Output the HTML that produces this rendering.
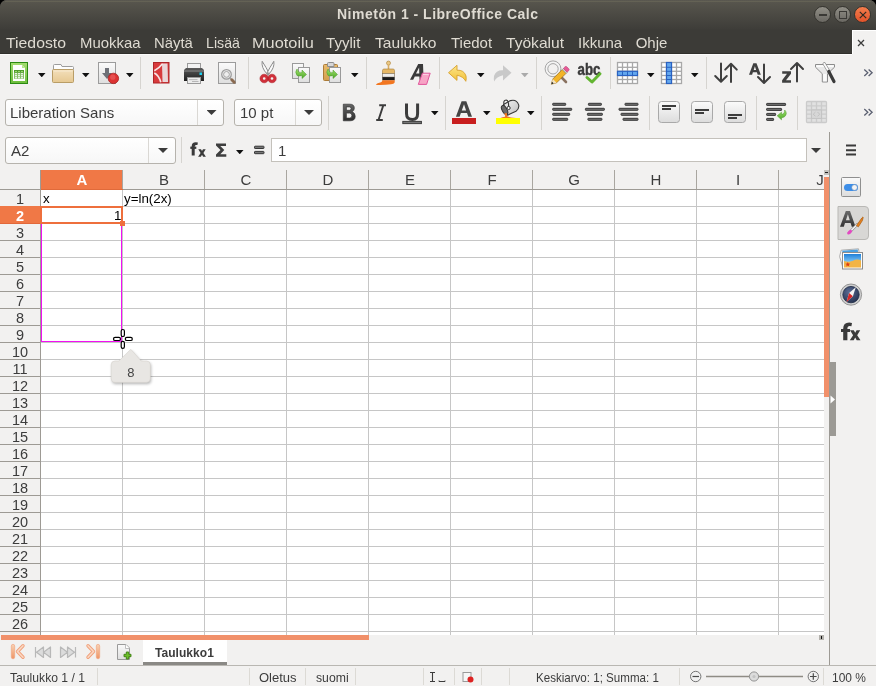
<!DOCTYPE html><html><head><meta charset="utf-8"><style>
*{box-sizing:border-box;margin:0;padding:0}
html,body{width:876px;height:686px;overflow:hidden;background:#000}
body{position:relative;font-family:"Liberation Sans",sans-serif;color:#3c3c3c}
.a{position:absolute}
svg{position:absolute;overflow:visible}
#win{will-change:transform;position:absolute;left:0;top:0;width:876px;height:686px;background:linear-gradient(#5a5850 0px,#3c3b37 54px,#f2f1f0 54px);border-radius:7px 7px 0 0;overflow:hidden}
.mi{position:absolute;top:34px;font-size:15px;color:#dfdbd2;white-space:nowrap;transform-origin:0 0}
.wb{position:absolute;top:6px;width:17px;height:17px;border-radius:50%;border:1px solid #35342f}
.sep{position:absolute;width:1px;background:#d6d4d0}
.dd{position:absolute;width:7.5px;height:4.3px;background:#111;clip-path:polygon(0 0,100% 0,50% 100%)}
.dd2{position:absolute;width:10px;height:5px;background:#3c3c3c;clip-path:polygon(0 0,100% 0,50% 100%)}
.box{position:absolute;background:linear-gradient(#fff,#f7f7f7);border:1px solid #b6b3ad;border-radius:3px}
.ui{font-size:15px;color:#3c3c3c;white-space:nowrap;position:absolute}
.rh{position:absolute;left:0;width:40px;height:17px;text-align:center;font-size:14.5px;color:#3c3c3c;line-height:18px}
.ch{position:absolute;top:170px;height:19px;width:82px;text-align:center;font-size:15px;color:#3c3c3c;line-height:19px}
.cell{position:absolute;font-size:13.33px;color:#000;white-space:nowrap}
.st{position:absolute;top:670px;font-size:13px;color:#3c3c3c;white-space:nowrap;transform-origin:0 0}
.ssep{position:absolute;top:668px;height:17px;width:1px;background:#dcdad5}
</style></head><body><div id="win">
<div class="a" style="left:0;top:0;width:876px;height:54px;background:linear-gradient(#5a5850 0px,#56544c 3px,#3e3d39 29px,#3c3b37 30px)"></div>
<div class="a" style="left:5px;top:1px;width:866px;height:1px;background:#646255"></div>
<div class="a" style="left:337px;top:6px;font-weight:bold;font-size:14px;color:#dfdbd2;letter-spacing:0.5px;white-space:nowrap">Nimetön 1 - LibreOffice Calc</div>
<div class="wb" style="left:814px;background:linear-gradient(#908e86,#6a6862)"><div class="a" style="left:3.5px;top:7px;width:8px;height:1.5px;background:#3a3935"></div></div>
<div class="wb" style="left:834px;background:linear-gradient(#908e86,#6a6862)"><div class="a" style="left:4px;top:4px;width:8px;height:8px;border:1.5px solid #3a3935"></div></div>
<div class="wb" style="left:854px;background:linear-gradient(#f37d4c,#e2532a)"><svg style="left:3px;top:3px" width="10" height="10"><path d="M1.8 1.8L8.2 8.2M8.2 1.8L1.8 8.2" stroke="#2f2a22" stroke-width="1.2"/></svg></div>
<div class="a" style="left:852px;top:30px;width:24px;height:24px;background:#f2f1f0;border-left:1px solid #fff;border-top:1px solid #fff"><svg style="left:4px;top:8px" width="8" height="8"><path d="M1 1L7 7M7 1L1 7" stroke="#3c3c3c" stroke-width="1.3"/></svg></div>
<div class="a" style="left:0;top:53px;width:852px;height:1px;background:#302f2b"></div><div class="a" style="left:0;top:54px;width:852px;height:1px;background:#fbfbfa"></div>
<span class="mi" style="left:6.0px;transform:scaleX(1.053)">Tiedosto</span>
<span class="mi" style="left:80.0px;transform:scaleX(0.994)">Muokkaa</span>
<span class="mi" style="left:154.4px;transform:scaleX(0.990)">Näytä</span>
<span class="mi" style="left:206.0px;transform:scaleX(0.946)">Lisää</span>
<span class="mi" style="left:251.6px;transform:scaleX(1.089)">Muotoilu</span>
<span class="mi" style="left:325.8px;transform:scaleX(1.006)">Tyylit</span>
<span class="mi" style="left:374.7px;transform:scaleX(1.039)">Taulukko</span>
<span class="mi" style="left:450.7px;transform:scaleX(0.998)">Tiedot</span>
<span class="mi" style="left:505.8px;transform:scaleX(1.039)">Työkalut</span>
<span class="mi" style="left:578.0px;transform:scaleX(1.000)">Ikkuna</span>
<span class="mi" style="left:635.7px;transform:scaleX(1.000)">Ohje</span>
<div class="sep" style="left:140px;top:57px;height:32px"></div>
<div class="sep" style="left:248px;top:57px;height:32px"></div>
<div class="sep" style="left:366px;top:57px;height:32px"></div>
<div class="sep" style="left:439px;top:57px;height:32px"></div>
<div class="sep" style="left:536px;top:57px;height:32px"></div>
<div class="sep" style="left:610px;top:57px;height:32px"></div>
<div class="sep" style="left:706px;top:57px;height:32px"></div>
<div class="dd" style="left:38px;top:73px"></div>
<div class="dd" style="left:82px;top:73px"></div>
<div class="dd" style="left:126px;top:73px"></div>
<div class="dd" style="left:351px;top:73px"></div>
<div class="dd" style="left:477px;top:73px"></div>
<div class="dd" style="left:647px;top:73px"></div>
<div class="dd" style="left:691px;top:73px"></div>
<div class="dd" style="left:521px;top:73px;background:#aaa"></div>
<svg style="left:0px;top:54px" width="876" height="38" viewBox="0 54 876 38"><defs>
<linearGradient id="gGreen" x1="0" y1="0" x2="0" y2="1"><stop offset="0" stop-color="#a5dd72"/><stop offset="1" stop-color="#6cbd3c"/></linearGradient>
<linearGradient id="gFold" x1="0" y1="0" x2="0" y2="1"><stop offset="0" stop-color="#f3dfbb"/><stop offset="1" stop-color="#e6c891"/></linearGradient>
<linearGradient id="gPage" x1="0" y1="0" x2="0" y2="1"><stop offset="0" stop-color="#fbfbfb"/><stop offset="1" stop-color="#dedede"/></linearGradient>
<linearGradient id="gPrn" x1="0" y1="0" x2="0" y2="1"><stop offset="0" stop-color="#5a5a5a"/><stop offset="1" stop-color="#1e1e1e"/></linearGradient>
<linearGradient id="gClip" x1="0" y1="0" x2="0" y2="1"><stop offset="0" stop-color="#e9bb6c"/><stop offset="1" stop-color="#d39f50"/></linearGradient>
<linearGradient id="gYel" x1="0" y1="0" x2="0" y2="1"><stop offset="0" stop-color="#fde68a"/><stop offset="1" stop-color="#f2c23a"/></linearGradient>
<linearGradient id="gArr" x1="0" y1="0" x2="0" y2="1"><stop offset="0" stop-color="#9ee06a"/><stop offset="1" stop-color="#4ea82a"/></linearGradient>
<linearGradient id="gDark" x1="0" y1="0" x2="0" y2="1"><stop offset="0" stop-color="#666"/><stop offset="1" stop-color="#2e2e2e"/></linearGradient>
<linearGradient id="gBtn" x1="0" y1="0" x2="0" y2="1"><stop offset="0" stop-color="#fbfbfb"/><stop offset="1" stop-color="#dcdcdc"/></linearGradient>
<linearGradient id="gSilver" x1="0" y1="0" x2="1" y2="1"><stop offset="0" stop-color="#f4f4f4"/><stop offset="1" stop-color="#bdbdbd"/></linearGradient>
</defs><rect x="10.5" y="62.5" width="17" height="21" fill="url(#gGreen)" stroke="#2b8a12" stroke-width="1"/><path d="M13 65H22L25 68V81H13Z" fill="#fff"/><path d="M22 65L25 68H22Z" fill="#b6e48c"/><rect x="14" y="70" width="10" height="8.8" fill="#86bf68"/><rect x="14" y="70" width="10" height="2.6" fill="#4e9b2c"/><rect x="15" y="71" width="2" height="1" fill="#9ad86a"/><rect x="15" y="73.2" width="2" height="1.1" fill="#fff"/><rect x="15" y="75.2" width="2" height="1.1" fill="#fff"/><rect x="15" y="77.2" width="2" height="1.1" fill="#fff"/><rect x="18" y="71" width="2" height="1" fill="#9ad86a"/><rect x="18" y="73.2" width="2" height="1.1" fill="#fff"/><rect x="18" y="75.2" width="2" height="1.1" fill="#fff"/><rect x="18" y="77.2" width="2" height="1.1" fill="#fff"/><rect x="21" y="71" width="2" height="1" fill="#9ad86a"/><rect x="21" y="73.2" width="2" height="1.1" fill="#fff"/><rect x="21" y="75.2" width="2" height="1.1" fill="#fff"/><rect x="21" y="77.2" width="2" height="1.1" fill="#fff"/><path d="M53.5 69.5V65.5Q53.5 64.5 54.5 64.5H61L62 66.5H72.5Q73.5 66.5 73.5 67.5V69.5Z" fill="#fdfdfd" stroke="#9c9c9c"/><rect x="52.5" y="69.5" width="21" height="13" rx="1" fill="url(#gFold)" stroke="#b99d66"/><rect x="53.5" y="70.5" width="19" height="1" fill="#f8ead0"/><rect x="98.5" y="62.5" width="17" height="21" fill="url(#gPage)" stroke="#9c9c9c"/><path d="M105 68H109V73H112L107 79L102 73H105Z" fill="#6d7077"/><circle cx="113.4" cy="78.4" r="5.2" fill="#dc3232" stroke="#a81e1e" stroke-width="0.8"/><circle cx="112.8" cy="77.2" r="2.6" fill="#ee6a6a" opacity="0.55"/><rect x="153.5" y="62.5" width="15.5" height="20.5" fill="#d83b3d" stroke="#ad2629"/><path d="M162 63.5L167.5 63.5L168 82L162.5 82Z" fill="#e9d6d8"/><path d="M162.5 63.8Q159 68.5 154.3 70.8" stroke="#f6e4e4" stroke-width="1.7" fill="none"/><path d="M154.3 73Q159 75.5 160.8 82.3" stroke="#f6e4e4" stroke-width="1.7" fill="none"/><rect x="187.5" y="63.5" width="13" height="7" fill="#f2f2f2" stroke="#9a9a9a"/><path d="M186 68H202L204 70V81H184V70Z" fill="url(#gPrn)"/><rect x="184" y="70" width="20" height="2" fill="#6a6a6a"/><rect x="199.5" y="72.5" width="2.5" height="2.5" fill="#18d0f0"/><rect x="187.5" y="77.5" width="13" height="6" fill="#ececec" stroke="#9a9a9a"/><rect x="189" y="79.3" width="8.5" height="0.8" fill="#aaa"/><rect x="192" y="81.2" width="6.5" height="0.8" fill="#aaa"/><rect x="218.5" y="62.5" width="17" height="21" fill="url(#gPage)" stroke="#9c9c9c"/><circle cx="226.5" cy="74.4" r="4.8" fill="none" stroke="#9b9b9b" stroke-width="1.2"/><circle cx="226.5" cy="74.4" r="2.9" fill="#eee" stroke="#a5a5a5" stroke-width="1"/><path d="M229.8 77.8L231.2 79.2" stroke="#a0a0a0" stroke-width="1.4"/><path d="M231.8 79.8L234.2 82.2" stroke="#8a6a50" stroke-width="3" stroke-linecap="round"/><path d="M262.2 61.3Q261 67.5 267.2 74.2L269 73Q266.2 67.5 262.2 61.3Z" fill="#fbfbfb" stroke="#8a8a8a" stroke-width="1"/><path d="M273.8 61.3Q275 67.5 268.8 74.2L267 73Q269.8 67.5 273.8 61.3Z" fill="#fbfbfb" stroke="#8a8a8a" stroke-width="1"/><path d="M266.6 72.5L269.4 72.5L269 75.5L267 75.5Z" fill="#9a9a9a"/><circle cx="264.2" cy="78.5" r="2.8" fill="none" stroke="#d0303a" stroke-width="2.9"/><circle cx="272" cy="78.5" r="2.8" fill="none" stroke="#d0303a" stroke-width="2.9"/><circle cx="264.2" cy="78.5" r="4.3" fill="none" stroke="#a81e26" stroke-width="0.5"/><circle cx="272" cy="78.5" r="4.3" fill="none" stroke="#a81e26" stroke-width="0.5"/><rect x="292.5" y="63.5" width="11" height="15" fill="url(#gPage)" stroke="#9a9a9a"/><rect x="298.5" y="67.5" width="11" height="15" fill="url(#gPage)" stroke="#9a9a9a"/><path d="M297 69Q294.5 72 297 75.5Q299 76.5 302 75.5L302 78.5L306.5 74.5L302 70L302 72.5Q298.5 73.5 297 69Z" fill="url(#gArr)" stroke="#4a9a28" stroke-width="0.5"/><rect x="323.5" y="64.5" width="14" height="16" rx="1" fill="url(#gClip)" stroke="#ad7c38"/><path d="M327.5 66.5V63.5Q327.5 62.5 328.5 62.5H333Q334 62.5 334 63.5V66.5Z" fill="#d8d8d8" stroke="#8e8e8e"/><rect x="329.5" y="67.5" width="11" height="15" fill="url(#gPage)" stroke="#9a9a9a"/><path d="M328 69Q325.5 72 328 75.5Q330 76.5 333 75.5L333 78.5L337.5 74.5L333 70L333 72.5Q329.5 73.5 328 69Z" fill="url(#gArr)" stroke="#4a9a28" stroke-width="0.5"/><circle cx="388.5" cy="63.1" r="2" fill="#ebc884" stroke="#b58a40" stroke-width="0.7"/><rect x="387.7" y="64.8" width="1.6" height="4.6" fill="#d9ad62"/><path d="M382.5 70.5Q382.5 69 384 69H393Q394.5 69 394.5 70.5V73.5H382.5Z" fill="#e6b866" stroke="#a57c38" stroke-width="0.6"/><rect x="382.5" y="73.5" width="12" height="3.6" fill="#ededed" stroke="#7a6a50" stroke-width="0.6"/><rect x="382.3" y="77.1" width="12.4" height="3.2" fill="#1a1a1a"/><path d="M382.3 80.2H394.7V82.5Q394 84 391 84.3Q386 84.8 380 84.9Q376.5 85 375.8 84.4Q377 83 381 82.2Q382.3 81.8 382.3 80.2Z" fill="#f27620"/><path d="M410 79.8L418.2 64H423L423.6 79.8H419.6L419.4 76.4H414.8L413.2 79.8ZM416 73.6H419.3L419.1 67.6Z" fill="#3a3a3a" fill-rule="evenodd"/><path d="M422.4 73.2H430.2L426.6 84.4H418.3Z" fill="#f7a3c5" stroke="#e0559a" stroke-width="1"/><path d="M422.9 74.4H428.6" stroke="#fcd6e6" stroke-width="1"/><path d="M448.5 72.7L457 65.3V70.2Q464 69.8 466 76Q466.5 79 465.8 81.3Q463.5 76.5 457 75.2V80.4Z" fill="url(#gYel)" stroke="#d7a02e" stroke-width="0.9" stroke-linejoin="round"/><path d="M511.5 72.8L503 65.2V70.2Q496 69.8 494 76Q493.5 79 494.2 81.5Q496.5 76.5 503 75.2V80.5Z" fill="#c9c9c9"/><circle cx="553" cy="68.8" r="6.6" fill="none" stroke="#f4f4f4" stroke-width="2.6"/><circle cx="553" cy="68.8" r="7.9" fill="none" stroke="#9c9c9c" stroke-width="0.9"/><circle cx="553" cy="68.8" r="5.2" fill="#f2f1f0" stroke="#9c9c9c" stroke-width="0.9"/><path d="M559.8 75.6L566 82" stroke="#8a7260" stroke-width="2.6" stroke-linecap="round"/><path d="M551.3 84.2L552.8 79L562.3 69.5L566.1 73.3L556.6 82.8Z" fill="#f2b428" stroke="#9a6a14" stroke-width="0.7" stroke-linejoin="round"/><path d="M562.3 69.5L563.4 68.4L567.2 72.2L566.1 73.3Z" fill="#cfcfcf" stroke="#888" stroke-width="0.5"/><path d="M563.4 68.4L565 66.8Q565.9 65.9 566.8 66.8L568.8 68.8Q569.7 69.7 568.8 70.6L567.2 72.2Z" fill="#e75a95" stroke="#b03a70" stroke-width="0.5"/><path d="M551.3 84.2L552.8 79L556.6 82.8Z" fill="#f2e2c0"/><path d="M551.3 84.2L552 81.8L553.7 83.5Z" fill="#222"/><text x="577.6" y="74.7" font-family="Liberation Sans" font-weight="bold" font-size="16" fill="#3a3a3a" stroke="#3a3a3a" stroke-width="0.5" textLength="22.8" lengthAdjust="spacingAndGlyphs">abc</text><path d="M587 77.5L592 82L600 73.8" fill="none" stroke="#63b531" stroke-width="3" stroke-linecap="round" stroke-linejoin="round"/><rect x="617.5" y="62.5" width="20" height="21" fill="#fff" stroke="#a8a8a8" stroke-width="1.3"/><path d="M622.5 62.5V83.5" stroke="#a8a8a8" stroke-width="1.3"/><path d="M627.5 62.5V83.5" stroke="#a8a8a8" stroke-width="1.3"/><path d="M632.5 62.5V83.5" stroke="#a8a8a8" stroke-width="1.3"/><path d="M617.5 67.3H637.5" stroke="#a8a8a8" stroke-width="1.3"/><path d="M617.5 71.3H637.5" stroke="#a8a8a8" stroke-width="1.3"/><path d="M617.5 75.5H637.5" stroke="#a8a8a8" stroke-width="1.3"/><path d="M617.5 79.5H637.5" stroke="#a8a8a8" stroke-width="1.3"/><rect x="617.5" y="71.3" width="20" height="4.2" fill="#63a8ee" stroke="#2a62c2" stroke-width="1.2"/><path d="M622.5 71.3V75.5" stroke="#2a62c2" stroke-width="1"/><path d="M627.5 71.3V75.5" stroke="#2a62c2" stroke-width="1"/><path d="M632.5 71.3V75.5" stroke="#2a62c2" stroke-width="1"/><rect x="661.5" y="62.5" width="20" height="21" fill="#fff" stroke="#a8a8a8" stroke-width="1.3"/><path d="M666.5 62.5V83.5" stroke="#a8a8a8" stroke-width="1.3"/><path d="M671.5 62.5V83.5" stroke="#a8a8a8" stroke-width="1.3"/><path d="M676.5 62.5V83.5" stroke="#a8a8a8" stroke-width="1.3"/><path d="M661.5 67.3H681.5" stroke="#a8a8a8" stroke-width="1.3"/><path d="M661.5 71.3H681.5" stroke="#a8a8a8" stroke-width="1.3"/><path d="M661.5 75.5H681.5" stroke="#a8a8a8" stroke-width="1.3"/><path d="M661.5 79.5H681.5" stroke="#a8a8a8" stroke-width="1.3"/><rect x="666.5" y="62.5" width="5" height="21" fill="#63a8ee" stroke="#2a62c2" stroke-width="1.2"/><path d="M666.5 67.3H671.5" stroke="#2a62c2" stroke-width="1"/><path d="M666.5 71.3H671.5" stroke="#2a62c2" stroke-width="1"/><path d="M666.5 75.5H671.5" stroke="#2a62c2" stroke-width="1"/><path d="M666.5 79.5H671.5" stroke="#2a62c2" stroke-width="1"/><path d="M721 63.5V81.5M715.2 76L721 81.8L726.8 76" fill="none" stroke="#3f3f3f" stroke-width="2" stroke-linecap="round" stroke-linejoin="round"/><path d="M731 82V63.8M725.2 69.6L731 63.8L736.8 69.6" fill="none" stroke="#3f3f3f" stroke-width="2" stroke-linecap="round" stroke-linejoin="round"/><path d="M749 74.7L753.3 63.2H756.5L760.8 74.7H757.7L756.9 72.3H752.9L752.1 74.7ZM753.7 69.9H756.1L754.9 66.2Z" fill="#404040" fill-rule="evenodd"/><path d="M764 64.5V82.5M758 77L764 83L770 77" fill="none" stroke="#3f3f3f" stroke-width="2" stroke-linecap="round" stroke-linejoin="round"/><path d="M782.2 71.3H791V73.8L786 80.2H791V82.7H782.1V80.2L787 73.8H782.2Z" fill="#404040"/><path d="M797 81.5V63M791 69L797 63L803 69" fill="none" stroke="#3f3f3f" stroke-width="2" stroke-linecap="round" stroke-linejoin="round"/><path d="M815.5 64.5H834.5V67.2L827.5 73.8V82H822.3V73.8L815.5 67.2Z" fill="#e9e9e9" stroke="#8c8c8c" stroke-width="1" stroke-linejoin="round"/><path d="M816.3 65.3H833.7V66.8H816.3Z" fill="#fff"/><path d="M823.2 74H826.6V81.3H823.2Z" fill="#fafafa"/><path d="M824.2 63.8L829 71.8" stroke="#8a8a8a" stroke-width="3.2" stroke-linecap="round"/><path d="M824.2 63.8L829 71.8" stroke="#fbfbfb" stroke-width="1.8" stroke-linecap="round"/><path d="M828.8 71.5L834 81.5" stroke="#3a3a3a" stroke-width="3.2" stroke-linecap="round"/><path d="M864.3 69.5L867.8 72.7L864.3 75.9M868.6 69.5L872.1 72.7L868.6 75.9" fill="none" stroke="#5a5f70" stroke-width="1.3"/></svg>
<div class="box" style="left:5px;top:99px;width:219px;height:27px"></div>
<div class="a" style="left:197px;top:100px;width:1px;height:25px;background:#dad8d4"></div>
<div class="dd2" style="left:206.5px;top:110px"></div>
<div class="ui" style="left:10px;top:104px">Liberation Sans</div>
<div class="box" style="left:234px;top:99px;width:88px;height:27px"></div>
<div class="a" style="left:295px;top:100px;width:1px;height:25px;background:#dad8d4"></div>
<div class="dd2" style="left:304px;top:110px"></div>
<div class="ui" style="left:240px;top:104px">10 pt</div>
<div class="sep" style="left:328px;top:96px;height:34px"></div>
<div class="sep" style="left:445px;top:96px;height:34px"></div>
<div class="sep" style="left:541px;top:96px;height:34px"></div>
<div class="sep" style="left:649px;top:96px;height:34px"></div>
<div class="sep" style="left:756px;top:96px;height:34px"></div>
<div class="sep" style="left:797px;top:96px;height:34px"></div>
<div class="dd" style="left:431px;top:111px"></div>
<div class="dd" style="left:483px;top:111px"></div>
<div class="dd" style="left:527px;top:111px"></div>
<svg style="left:330px;top:92px" width="546" height="40" viewBox="330 92 546 40"><defs>
<linearGradient id="hGreen" x1="0" y1="0" x2="0" y2="1"><stop offset="0" stop-color="#a5dd72"/><stop offset="1" stop-color="#6cbd3c"/></linearGradient>
<linearGradient id="hFold" x1="0" y1="0" x2="0" y2="1"><stop offset="0" stop-color="#f3dfbb"/><stop offset="1" stop-color="#e6c891"/></linearGradient>
<linearGradient id="hPage" x1="0" y1="0" x2="0" y2="1"><stop offset="0" stop-color="#fbfbfb"/><stop offset="1" stop-color="#dedede"/></linearGradient>
<linearGradient id="hPrn" x1="0" y1="0" x2="0" y2="1"><stop offset="0" stop-color="#5a5a5a"/><stop offset="1" stop-color="#1e1e1e"/></linearGradient>
<linearGradient id="hClip" x1="0" y1="0" x2="0" y2="1"><stop offset="0" stop-color="#e9bb6c"/><stop offset="1" stop-color="#d39f50"/></linearGradient>
<linearGradient id="hYel" x1="0" y1="0" x2="0" y2="1"><stop offset="0" stop-color="#fde68a"/><stop offset="1" stop-color="#f2c23a"/></linearGradient>
<linearGradient id="hArr" x1="0" y1="0" x2="0" y2="1"><stop offset="0" stop-color="#9ee06a"/><stop offset="1" stop-color="#4ea82a"/></linearGradient>
<linearGradient id="hDark" x1="0" y1="0" x2="0" y2="1"><stop offset="0" stop-color="#666"/><stop offset="1" stop-color="#2e2e2e"/></linearGradient>
<linearGradient id="hBtn" x1="0" y1="0" x2="0" y2="1"><stop offset="0" stop-color="#fbfbfb"/><stop offset="1" stop-color="#dcdcdc"/></linearGradient>
<linearGradient id="hSilver" x1="0" y1="0" x2="1" y2="1"><stop offset="0" stop-color="#f4f4f4"/><stop offset="1" stop-color="#bdbdbd"/></linearGradient>
</defs><path d="M343.3 104.2H349.8Q354.3 104.2 354.3 108.2Q354.3 110.8 352.2 111.8Q355.2 112.9 355.2 116.4Q355.2 120.8 349.9 120.8H343.3ZM346.4 106.9V110.3H349.4Q351.1 110.3 351.1 108.6Q351.1 106.9 349.4 106.9ZM346.4 113.1V118.1H349.8Q351.9 118.1 351.9 115.6Q351.9 113.1 349.8 113.1Z" fill="url(#hDark)" stroke="#363636" stroke-width="0.7" fill-rule="evenodd"/><path d="M379.2 104.2H386V106.2H384L379.8 119H382.8V121H376.2V119H377.8L382 106.2H379.2Z" fill="#3c3c3c"/><path d="M406.5 103.5V113.5Q406.5 119.6 412.5 119.6Q417.6 119.6 417.6 113.5V103.5" fill="none" stroke="#3c3c3c" stroke-width="3"/><rect x="402.8" y="121.4" width="18.6" height="2.2" fill="#777" stroke="#3c3c3c" stroke-width="1"/><path d="M455.9 116.8L461.6 101.2H466.3L472 116.8H468.3L467 113H460.9L459.6 116.8ZM461.8 110.4H466.1L464 104.2Z" fill="#454545" fill-rule="evenodd"/><rect x="452" y="118" width="24" height="6" fill="#c81e1e"/><path d="M503.5 104.5L510.5 100.6Q516.5 99 518.6 104.6Q519.6 108.8 516 111.2L507.5 115.2Z" fill="url(#hSilver)" stroke="#3a3a3a" stroke-width="1.1" stroke-linejoin="round"/><ellipse cx="504.6" cy="110" rx="2.4" ry="5" transform="rotate(-28 504.6 110)" fill="#6a6a6a" stroke="#333" stroke-width="1"/><path d="M504 104.5Q503 100.2 506.2 100Q508.8 100.2 508.6 106.8" fill="none" stroke="#333" stroke-width="1.1"/><circle cx="508.6" cy="108" r="1.6" fill="#fafafa" stroke="#333" stroke-width="1"/><path d="M504 113.5Q505.6 115 505 116.8Q502 117.3 500.5 118H516Q510 117.5 507.5 116.6Q506.8 115 507 113Z" fill="#f07a22"/><rect x="496" y="118" width="24" height="6" fill="#ffff00"/><rect x="552.7" y="103.3" width="13" height="2" rx="0.5" fill="#737373" stroke="#363636" stroke-width="1"/><rect x="552.7" y="108.3" width="19" height="2" rx="0.5" fill="#737373" stroke="#363636" stroke-width="1"/><rect x="552.7" y="113.3" width="17" height="2" rx="0.5" fill="#737373" stroke="#363636" stroke-width="1"/><rect x="552.7" y="118.3" width="15" height="2" rx="0.5" fill="#737373" stroke="#363636" stroke-width="1"/><rect x="588.4" y="103.3" width="13" height="2" rx="0.5" fill="#737373" stroke="#363636" stroke-width="1"/><rect x="585.4" y="108.3" width="19" height="2" rx="0.5" fill="#737373" stroke="#363636" stroke-width="1"/><rect x="587.4" y="113.3" width="15" height="2" rx="0.5" fill="#737373" stroke="#363636" stroke-width="1"/><rect x="587.9" y="118.3" width="14" height="2" rx="0.5" fill="#737373" stroke="#363636" stroke-width="1"/><rect x="625.0" y="103.3" width="13" height="2" rx="0.5" fill="#737373" stroke="#363636" stroke-width="1"/><rect x="619.0" y="108.3" width="19" height="2" rx="0.5" fill="#737373" stroke="#363636" stroke-width="1"/><rect x="621.0" y="113.3" width="17" height="2" rx="0.5" fill="#737373" stroke="#363636" stroke-width="1"/><rect x="623.0" y="118.3" width="15" height="2" rx="0.5" fill="#737373" stroke="#363636" stroke-width="1"/><rect x="658.5" y="101.5" width="21" height="21" rx="3" fill="url(#hBtn)" stroke="#a9a9a9"/><rect x="662.0" y="105" width="14" height="2" fill="#3c3c3c"/><rect x="662.0" y="108" width="9" height="2" fill="#3c3c3c"/><rect x="691.5" y="101.5" width="21" height="21" rx="3" fill="url(#hBtn)" stroke="#a9a9a9"/><rect x="695.0" y="109" width="14" height="2" fill="#3c3c3c"/><rect x="695.0" y="112" width="9" height="2" fill="#3c3c3c"/><rect x="724.5" y="101.5" width="21" height="21" rx="3" fill="url(#hBtn)" stroke="#a9a9a9"/><rect x="728.0" y="114" width="14" height="2" fill="#3c3c3c"/><rect x="728.0" y="117" width="9" height="2" fill="#3c3c3c"/><rect x="766.6" y="103.4" width="19" height="2" rx="0.5" fill="#737373" stroke="#363636" stroke-width="1"/><rect x="766.6" y="108.4" width="15" height="2" rx="0.5" fill="#737373" stroke="#363636" stroke-width="1"/><rect x="766.6" y="113.4" width="9" height="2" rx="0.5" fill="#737373" stroke="#363636" stroke-width="1"/><rect x="766.6" y="118.4" width="7" height="2" rx="0.5" fill="#737373" stroke="#363636" stroke-width="1"/><path d="M784.7 110Q788 113.5 784.5 116.8Q782.5 117.8 781.5 117.6V119.8L777.2 115.8L781.5 112.2V114.3Q784.8 114.2 784.7 110Z" fill="url(#hArr)" stroke="#4a9a28" stroke-width="0.5"/><rect x="806.5" y="101.5" width="20" height="21" rx="1" fill="#e1e1e1" stroke="#cbcbcb" stroke-width="1.3"/><path d="M811.5 101.5V122.5" stroke="#cbcbcb" stroke-width="1.3"/><path d="M816.5 101.5V122.5" stroke="#cbcbcb" stroke-width="1.3"/><path d="M821.5 101.5V122.5" stroke="#cbcbcb" stroke-width="1.3"/><path d="M806.5 105.8H826.5" stroke="#cbcbcb" stroke-width="1.3"/><path d="M806.5 110H826.5" stroke="#cbcbcb" stroke-width="1.3"/><path d="M806.5 114.2H826.5" stroke="#cbcbcb" stroke-width="1.3"/><path d="M806.5 118.4H826.5" stroke="#cbcbcb" stroke-width="1.3"/><rect x="811.5" y="110" width="10" height="8.4" fill="#d7d7d7" stroke="#c4c4c4"/><path d="M815.5 112L813.3 114.2L815.5 116.4M817.5 112L819.7 114.2L817.5 116.4" fill="none" stroke="#bbb" stroke-width="0.8"/><path d="M864.3 109L867.8 112.2L864.3 115.4M868.6 109L872.1 112.2L868.6 115.4" fill="none" stroke="#5a5f70" stroke-width="1.3"/></svg>
<div class="box" style="left:5px;top:137px;width:171px;height:27px"></div>
<div class="a" style="left:148px;top:138px;width:1px;height:25px;background:#dad8d4"></div>
<div class="dd2" style="left:158px;top:148px"></div>
<div class="ui" style="left:11px;top:142px">A2</div>
<div class="sep" style="left:181px;top:137px;height:26px"></div>
<div class="dd" style="left:236px;top:150px"></div>
<div class="a" style="left:271px;top:138px;width:536px;height:24px;background:#fff;border:1px solid #c4c1bb"></div>
<div class="ui" style="left:278px;top:142px">1</div>
<div class="dd2" style="left:811px;top:148px"></div>
<svg style="left:180px;top:136px" width="680" height="26" viewBox="180 136 680 26"><defs></defs><path d="M191.7 155.6V146.4Q191.7 142.3 195.8 142.3Q197 142.3 197.9 142.6L197.4 145.1Q196.6 144.9 196.1 144.9Q194.7 144.9 194.7 146.5V155.6Z" fill="#3a3a3a"/><rect x="190.3" y="146.6" width="6" height="2.3" fill="#3a3a3a"/><path d="M198.3 149.3H201L202 151L203 149.3H205.7L203.4 152.9L205.9 156.8H203.1L202 154.8L200.9 156.8H198.1L200.6 152.9Z" fill="#3a3a3a"/><path d="M216 143.5H226V146H220.3L224.3 150L220.3 154.2H226.3V156.8H216V154.6L220.5 150L216 145.6Z" fill="#3e3e3e"/><rect x="254.5" y="146.2" width="9.5" height="2.3" rx="0.6" fill="#777" stroke="#363636" stroke-width="1"/><rect x="254.5" y="151.4" width="9.5" height="2.3" rx="0.6" fill="#777" stroke="#363636" stroke-width="1"/><path d="M846 145.5H856M846 150.2H856M846 154.5H856" stroke="#3a3a3a" stroke-width="2"/></svg>
<div class="a" style="left:41px;top:190px;width:783px;height:445px;background:#fff"></div>
<div class="a" style="left:0;top:170px;width:824px;height:19px;background:#f2f1f0"></div>
<div class="a" style="left:41px;top:170px;width:82px;height:20px;background:#f07846"></div>
<div class="a" style="left:122px;top:190px;width:1px;height:445px;background:#c6c6c6"></div>
<div class="a" style="left:122px;top:170px;width:1px;height:19px;background:#a9a6a0"></div>
<div class="a" style="left:204px;top:190px;width:1px;height:445px;background:#c6c6c6"></div>
<div class="a" style="left:204px;top:170px;width:1px;height:19px;background:#a9a6a0"></div>
<div class="a" style="left:286px;top:190px;width:1px;height:445px;background:#c6c6c6"></div>
<div class="a" style="left:286px;top:170px;width:1px;height:19px;background:#a9a6a0"></div>
<div class="a" style="left:368px;top:190px;width:1px;height:445px;background:#c6c6c6"></div>
<div class="a" style="left:368px;top:170px;width:1px;height:19px;background:#a9a6a0"></div>
<div class="a" style="left:450px;top:190px;width:1px;height:445px;background:#c6c6c6"></div>
<div class="a" style="left:450px;top:170px;width:1px;height:19px;background:#a9a6a0"></div>
<div class="a" style="left:532px;top:190px;width:1px;height:445px;background:#c6c6c6"></div>
<div class="a" style="left:532px;top:170px;width:1px;height:19px;background:#a9a6a0"></div>
<div class="a" style="left:614px;top:190px;width:1px;height:445px;background:#c6c6c6"></div>
<div class="a" style="left:614px;top:170px;width:1px;height:19px;background:#a9a6a0"></div>
<div class="a" style="left:696px;top:190px;width:1px;height:445px;background:#c6c6c6"></div>
<div class="a" style="left:696px;top:170px;width:1px;height:19px;background:#a9a6a0"></div>
<div class="a" style="left:778px;top:190px;width:1px;height:445px;background:#c6c6c6"></div>
<div class="a" style="left:778px;top:170px;width:1px;height:19px;background:#a9a6a0"></div>
<div class="a" style="left:41px;top:206px;width:783px;height:1px;background:#c6c6c6"></div>
<div class="a" style="left:0;top:206px;width:40px;height:1px;background:#9d9a94"></div>
<div class="a" style="left:41px;top:223px;width:783px;height:1px;background:#c6c6c6"></div>
<div class="a" style="left:0;top:223px;width:40px;height:1px;background:#9d9a94"></div>
<div class="a" style="left:41px;top:240px;width:783px;height:1px;background:#c6c6c6"></div>
<div class="a" style="left:0;top:240px;width:40px;height:1px;background:#9d9a94"></div>
<div class="a" style="left:41px;top:257px;width:783px;height:1px;background:#c6c6c6"></div>
<div class="a" style="left:0;top:257px;width:40px;height:1px;background:#9d9a94"></div>
<div class="a" style="left:41px;top:274px;width:783px;height:1px;background:#c6c6c6"></div>
<div class="a" style="left:0;top:274px;width:40px;height:1px;background:#9d9a94"></div>
<div class="a" style="left:41px;top:291px;width:783px;height:1px;background:#c6c6c6"></div>
<div class="a" style="left:0;top:291px;width:40px;height:1px;background:#9d9a94"></div>
<div class="a" style="left:41px;top:308px;width:783px;height:1px;background:#c6c6c6"></div>
<div class="a" style="left:0;top:308px;width:40px;height:1px;background:#9d9a94"></div>
<div class="a" style="left:41px;top:325px;width:783px;height:1px;background:#c6c6c6"></div>
<div class="a" style="left:0;top:325px;width:40px;height:1px;background:#9d9a94"></div>
<div class="a" style="left:41px;top:342px;width:783px;height:1px;background:#c6c6c6"></div>
<div class="a" style="left:0;top:342px;width:40px;height:1px;background:#9d9a94"></div>
<div class="a" style="left:41px;top:359px;width:783px;height:1px;background:#c6c6c6"></div>
<div class="a" style="left:0;top:359px;width:40px;height:1px;background:#9d9a94"></div>
<div class="a" style="left:41px;top:376px;width:783px;height:1px;background:#c6c6c6"></div>
<div class="a" style="left:0;top:376px;width:40px;height:1px;background:#9d9a94"></div>
<div class="a" style="left:41px;top:393px;width:783px;height:1px;background:#c6c6c6"></div>
<div class="a" style="left:0;top:393px;width:40px;height:1px;background:#9d9a94"></div>
<div class="a" style="left:41px;top:410px;width:783px;height:1px;background:#c6c6c6"></div>
<div class="a" style="left:0;top:410px;width:40px;height:1px;background:#9d9a94"></div>
<div class="a" style="left:41px;top:427px;width:783px;height:1px;background:#c6c6c6"></div>
<div class="a" style="left:0;top:427px;width:40px;height:1px;background:#9d9a94"></div>
<div class="a" style="left:41px;top:444px;width:783px;height:1px;background:#c6c6c6"></div>
<div class="a" style="left:0;top:444px;width:40px;height:1px;background:#9d9a94"></div>
<div class="a" style="left:41px;top:461px;width:783px;height:1px;background:#c6c6c6"></div>
<div class="a" style="left:0;top:461px;width:40px;height:1px;background:#9d9a94"></div>
<div class="a" style="left:41px;top:478px;width:783px;height:1px;background:#c6c6c6"></div>
<div class="a" style="left:0;top:478px;width:40px;height:1px;background:#9d9a94"></div>
<div class="a" style="left:41px;top:495px;width:783px;height:1px;background:#c6c6c6"></div>
<div class="a" style="left:0;top:495px;width:40px;height:1px;background:#9d9a94"></div>
<div class="a" style="left:41px;top:512px;width:783px;height:1px;background:#c6c6c6"></div>
<div class="a" style="left:0;top:512px;width:40px;height:1px;background:#9d9a94"></div>
<div class="a" style="left:41px;top:529px;width:783px;height:1px;background:#c6c6c6"></div>
<div class="a" style="left:0;top:529px;width:40px;height:1px;background:#9d9a94"></div>
<div class="a" style="left:41px;top:546px;width:783px;height:1px;background:#c6c6c6"></div>
<div class="a" style="left:0;top:546px;width:40px;height:1px;background:#9d9a94"></div>
<div class="a" style="left:41px;top:563px;width:783px;height:1px;background:#c6c6c6"></div>
<div class="a" style="left:0;top:563px;width:40px;height:1px;background:#9d9a94"></div>
<div class="a" style="left:41px;top:580px;width:783px;height:1px;background:#c6c6c6"></div>
<div class="a" style="left:0;top:580px;width:40px;height:1px;background:#9d9a94"></div>
<div class="a" style="left:41px;top:597px;width:783px;height:1px;background:#c6c6c6"></div>
<div class="a" style="left:0;top:597px;width:40px;height:1px;background:#9d9a94"></div>
<div class="a" style="left:41px;top:614px;width:783px;height:1px;background:#c6c6c6"></div>
<div class="a" style="left:0;top:614px;width:40px;height:1px;background:#9d9a94"></div>
<div class="a" style="left:41px;top:631px;width:783px;height:1px;background:#c6c6c6"></div>
<div class="a" style="left:0;top:631px;width:40px;height:1px;background:#9d9a94"></div>
<div class="a" style="left:0;top:189px;width:824px;height:1px;background:#9d9a94"></div>
<div class="a" style="left:41px;top:189px;width:82px;height:1px;background:#e06a3a"></div>
<div class="a" style="left:40px;top:170px;width:1px;height:465px;background:#9d9a94"></div>
<div class="a" style="left:0;top:206px;width:40px;height:17px;background:#f07846"></div>
<div class="a" style="left:0;top:223px;width:40px;height:1px;background:#e2683a"></div>
<div class="a" style="left:40px;top:206px;width:1px;height:18px;background:#c8714c"></div>
<div class="ch" style="left:41px;color:#fff;font-weight:bold">A</div>
<div class="ch" style="left:123px">B</div>
<div class="ch" style="left:205px">C</div>
<div class="ch" style="left:287px">D</div>
<div class="ch" style="left:369px">E</div>
<div class="ch" style="left:451px">F</div>
<div class="ch" style="left:533px">G</div>
<div class="ch" style="left:615px">H</div>
<div class="ch" style="left:697px">I</div>
<div class="ch" style="left:779px">J</div>
<div class="rh" style="top:190px">1</div>
<div class="rh" style="top:207px;color:#fff;font-weight:bold">2</div>
<div class="rh" style="top:224px">3</div>
<div class="rh" style="top:241px">4</div>
<div class="rh" style="top:258px">5</div>
<div class="rh" style="top:275px">6</div>
<div class="rh" style="top:292px">7</div>
<div class="rh" style="top:309px">8</div>
<div class="rh" style="top:326px">9</div>
<div class="rh" style="top:343px">10</div>
<div class="rh" style="top:360px">11</div>
<div class="rh" style="top:377px">12</div>
<div class="rh" style="top:394px">13</div>
<div class="rh" style="top:411px">14</div>
<div class="rh" style="top:428px">15</div>
<div class="rh" style="top:445px">16</div>
<div class="rh" style="top:462px">17</div>
<div class="rh" style="top:479px">18</div>
<div class="rh" style="top:496px">19</div>
<div class="rh" style="top:513px">20</div>
<div class="rh" style="top:530px">21</div>
<div class="rh" style="top:547px">22</div>
<div class="rh" style="top:564px">23</div>
<div class="rh" style="top:581px">24</div>
<div class="rh" style="top:598px">25</div>
<div class="rh" style="top:615px">26</div>
<div class="a" style="left:824px;top:132px;width:5px;height:533px;background:#f2f1f0"></div>
<div class="a" style="left:824px;top:170px;width:5px;height:5px;background:#c4c2bd"><div class="a" style="left:1px;top:2px;width:3px;height:1px;background:#222"></div></div>
<div class="a" style="left:824px;top:177px;width:5px;height:220px;background:#f1906a"></div>
<div class="a" style="left:829px;top:132px;width:1px;height:534px;background:#9d9a94"></div>
<div class="cell" style="left:43px;top:191px">x</div>
<div class="cell" style="left:124px;top:191px">y=ln(2x)</div>
<div class="cell" style="left:114px;top:208px">1</div>
<div class="a" style="left:41px;top:222px;width:81px;height:120px;border:1px solid #f20ff2;border-top:none"></div>
<div class="a" style="left:40px;top:206px;width:83px;height:18px;border:2px solid #ee6f3c"></div>
<div class="a" style="left:120px;top:221px;width:5px;height:5px;background:#ee6f3c"></div>
<div class="a" style="left:109px;top:352px;width:44px;height:34px;border-radius:5px;box-shadow:0 1px 4px rgba(0,0,0,0.25);opacity:0"></div><svg style="left:105px;top:345px" width="52" height="42" viewBox="105 345 52 42"><defs><filter id="ts" x="-30%" y="-30%" width="160%" height="160%"><feGaussianBlur stdDeviation="1.6"/></filter></defs><path d="M115 361H119L130.8 349.3L141.2 361H146.5Q150.3 361 150.3 364.8V378.6Q150.3 382.4 146.5 382.4H115Q111.2 382.4 111.2 378.6V364.8Q111.2 361 115 361Z" fill="#000" opacity="0.3" filter="url(#ts)" transform="translate(0.8,1.6)"/><path d="M115 361H119L130.8 349.3L141.2 361H146.5Q150.3 361 150.3 364.8V378.6Q150.3 382.4 146.5 382.4H115Q111.2 382.4 111.2 378.6V364.8Q111.2 361 115 361Z" fill="#e8e6e3" stroke="#d6d3ce" stroke-width="0.6"/><text x="130.8" y="376.6" text-anchor="middle" font-family="Liberation Sans" font-size="13" fill="#444">8</text></svg><svg style="left:110px;top:326px" width="26" height="26" viewBox="110 326 26 26"><rect x="121.2" y="329.5" width="3.2" height="7" rx="1.6" fill="#fff" stroke="#000" stroke-width="1.2"/><rect x="121.2" y="341.3" width="3.2" height="7" rx="1.6" fill="#fff" stroke="#000" stroke-width="1.2"/><rect x="113.5" y="337.3" width="7" height="3.2" rx="1.6" fill="#fff" stroke="#000" stroke-width="1.2"/><rect x="125.3" y="337.3" width="7" height="3.2" rx="1.6" fill="#fff" stroke="#000" stroke-width="1.2"/></svg>
<div class="a" style="left:0;top:635px;width:824px;height:5px;background:#f2f1f0"></div>
<div class="a" style="left:1px;top:635px;width:368px;height:5px;background:#f1906a"></div>
<div class="a" style="left:819px;top:635px;width:5px;height:5px;background:#b4b2ad"><div class="a" style="left:2px;top:1px;width:1px;height:3px;background:#111"></div></div>
<svg style="left:834px;top:170px" width="42" height="180" viewBox="834 170 42 180"><defs><linearGradient id="sBtn" x1="0" y1="0" x2="0" y2="1"><stop offset="0" stop-color="#fafafa"/><stop offset="1" stop-color="#dcdcdc"/></linearGradient><linearGradient id="sDark" x1="0" y1="0" x2="0" y2="1"><stop offset="0" stop-color="#6a6a6a"/><stop offset="1" stop-color="#333"/></linearGradient><linearGradient id="sSky" x1="0" y1="0" x2="0" y2="1"><stop offset="0" stop-color="#1f7fd8"/><stop offset="1" stop-color="#7cc4f4"/></linearGradient><radialGradient id="sBlue" cx="0.4" cy="0.35" r="0.7"><stop offset="0" stop-color="#5a6d96"/><stop offset="1" stop-color="#26324f"/></radialGradient></defs><rect x="841.5" y="177.5" width="19" height="19" rx="1" fill="url(#sBtn)" stroke="#8f8f8f"/><rect x="844" y="184" width="14" height="7" rx="3.5" fill="#3d8ee8"/><circle cx="854.5" cy="187.5" r="2.9" fill="#f4f4f4" stroke="#4a7ab8" stroke-width="0.6"/><path d="M838 206.5H865Q868.5 206.5 868.5 210V236Q868.5 239.5 865 239.5H838Z" fill="#d8d7d5" stroke="#b9b8b5"/><path d="M840 226.8L845.8 211H850L855.5 226.8H851.8L850.6 223H845L843.8 226.8ZM845.9 220.2H849.8L847.9 214.3Z" fill="url(#sDark)" fill-rule="evenodd"/><path d="M851.2 230.6L857.4 224.2" stroke="#8a8a8a" stroke-width="2.6" stroke-linecap="round"/><path d="M851.2 230.6L857.4 224.2" stroke="#f4f4f4" stroke-width="1.4" stroke-linecap="round"/><path d="M856.4 225.6L861.8 218Q863 216.5 863.2 217.4L862.4 220.6L858.4 226.8Z" fill="#e6821e" stroke="#a85a10" stroke-width="0.7"/><ellipse cx="849.6" cy="232.2" rx="2.9" ry="1.7" transform="rotate(-40 849.6 232.2)" fill="#e24ac2"/><path d="M839.6 256.5L841.2 250.2L858.5 248.8L859.2 253L843 254L842.6 266.5Z" fill="#fbfbfb" stroke="#9a9a9a" stroke-width="0.8"/><path d="M842 250.8L857.8 249.5L858 252.2L843 253Z" fill="#4aa0e0"/><rect x="842.5" y="252.5" width="20" height="16.5" fill="#fdfdfd" stroke="#8d8d8d"/><rect x="844" y="254" width="17" height="13.5" fill="#f2b446"/><path d="M844 254H861V260.5Q857 258.5 853 260.8Q848.5 262.5 844 261Z" fill="url(#sSky)"/><path d="M847.8 262L848.5 263.6L850.2 263.8L848.9 264.8L849.3 266.4L847.8 265.5L846.3 266.4L846.7 264.8L845.4 263.8L847.1 263.6Z" fill="#e03a10"/><circle cx="851" cy="294.6" r="10.6" fill="#cfcfcf" stroke="#8a8a8a" stroke-width="0.9"/><circle cx="851" cy="294.6" r="8.2" fill="url(#sBlue)" stroke="#1e2a44" stroke-width="0.8"/><path d="M855.8 287.2L852.9 296.3L846.5 302L849.1 292.9Z" fill="#f4f4f4"/><path d="M852.9 296.3L846.5 302L849.1 292.9Z" fill="#d42828"/><path d="M843.2 340.2V328.6Q843.2 322.5 849.2 322.5Q850.8 322.5 852 322.9L851.4 326.2Q850.4 325.9 849.6 325.9Q847.4 325.9 847.4 328.6V340.2Z" fill="#3a3a3a"/><rect x="841" y="329" width="9" height="3" fill="#3a3a3a"/><path d="M850 330.2H853.8L855.2 332.8L856.6 330.2H860.2L857.2 335.2L860.5 340.2H856.7L855.2 337.4L853.7 340.2H849.8L853.1 335.2Z" fill="#3a3a3a"/></svg>
<div class="a" style="left:829px;top:362px;width:7px;height:74px;background:#9c9a95"></div>
<svg style="left:830px;top:395px" width="6" height="9"><path d="M0.5 0.5L5 4.5L0.5 8.5Z" fill="#fff"/></svg>
<svg style="left:5px;top:640px" width="130" height="25" viewBox="5 640 130 25"><defs><linearGradient id="tOr" x1="0" y1="0" x2="0" y2="1"><stop offset="0" stop-color="#f8d2b4"/><stop offset="1" stop-color="#ee9464"/></linearGradient><linearGradient id="tPg" x1="0" y1="0" x2="0" y2="1"><stop offset="0" stop-color="#fafafa"/><stop offset="1" stop-color="#dedede"/></linearGradient></defs><rect x="11.3" y="644.3" width="3.4" height="14.5" rx="1.7" fill="url(#tOr)" stroke="#f0a07a" stroke-width="0.6"/><path d="M23 645.8L17.5 651.5L23 657.2" fill="none" stroke="#f0a07a" stroke-width="3.4" stroke-linecap="round" stroke-linejoin="round"/><path d="M23 645.8L17.5 651.5L23 657.2" fill="none" stroke="#fad8c4" stroke-width="1.6" stroke-linecap="round" stroke-linejoin="round"/><rect x="96.3" y="644.3" width="3.4" height="14.5" rx="1.7" fill="url(#tOr)" stroke="#f0a07a" stroke-width="0.6"/><path d="M88 645.8L93.5 651.5L88 657.2" fill="none" stroke="#f0a07a" stroke-width="3.4" stroke-linecap="round" stroke-linejoin="round"/><path d="M88 645.8L93.5 651.5L88 657.2" fill="none" stroke="#fad8c4" stroke-width="1.6" stroke-linecap="round" stroke-linejoin="round"/><path d="M35.5 647V657.5M36.5 652.2L43.5 647V657.5ZM43.5 652.2L50.5 647V657.5Z" fill="#dcdcdc" stroke="#b8b8b8" stroke-width="1.2" stroke-linejoin="round"/><path d="M75.5 647V657.5M74.5 652.2L67.5 647V657.5ZM67.5 652.2L60.5 647V657.5Z" fill="#dcdcdc" stroke="#b8b8b8" stroke-width="1.2" stroke-linejoin="round"/><path d="M117.5 644.5H126L129.5 648V659.5H117.5Z" fill="url(#tPg)" stroke="#9a9a9a"/><path d="M125.5 644.5V648.5H129.5" fill="#fff" stroke="#b0b0b0" stroke-width="0.8"/><path d="M126.3 652H128.7V654.3H131V656.7H128.7V659H126.3V656.7H124V654.3H126.3Z" fill="#6cbf2a" stroke="#3b7e10" stroke-width="0.9"/></svg>
<div class="a" style="left:143px;top:640px;width:84px;height:25px;background:#fff"></div>
<div class="a" style="left:143px;top:662px;width:84px;height:3px;background:#8a8985"></div>
<div class="a" style="left:155px;top:646px;font-weight:bold;font-size:12px;color:#3c3c3c;letter-spacing:0.05px">Taulukko1</div>
<div class="a" style="left:0;top:665px;width:876px;height:1px;background:#b9b7b2"></div>
<div class="st" style="left:10px;transform:scaleX(0.935)">Taulukko 1 / 1</div>
<div class="ssep" style="left:97px"></div>
<div class="ssep" style="left:249px"></div>
<div class="ssep" style="left:305px"></div>
<div class="ssep" style="left:355px"></div>
<div class="ssep" style="left:423px"></div>
<div class="ssep" style="left:454px"></div>
<div class="ssep" style="left:481px"></div>
<div class="ssep" style="left:509px"></div>
<div class="ssep" style="left:679px"></div>
<div class="ssep" style="left:823px"></div>
<div class="st" style="left:259px">Oletus</div>
<div class="st" style="left:316px;transform:scaleX(0.94)">suomi</div>
<div class="st" style="left:536px;transform:scaleX(0.89)">Keskiarvo: 1; Summa: 1</div>
<div class="st" style="left:832px;transform:scaleX(0.92)">100 %</div>
<svg style="left:420px;top:666px" width="456" height="20" viewBox="420 666 456 20"><defs></defs><path d="M430 672.5H435M432.5 672.5V681.5M430 681.5H435" stroke="#3c3c3c" stroke-width="1.1" fill="none"/><path d="M439 680.5V681.5H445V680.5" stroke="#3c3c3c" stroke-width="1" fill="none"/><rect x="463" y="672.5" width="8" height="9" fill="#f6f6f6" stroke="#9a9a9a"/><circle cx="470.5" cy="679.5" r="3" fill="#d22" /><circle cx="695.7" cy="676.5" r="5.2" fill="#f0f0f0" stroke="#666" stroke-width="0.9"/><path d="M692.5 676.5H699" stroke="#4a4a4a" stroke-width="1.2"/><path d="M706 676.5H803" stroke="#8f8c85" stroke-width="1.7"/><circle cx="754" cy="676.5" r="4.6" fill="#dcdcdc" stroke="#8a8a8a" stroke-width="0.9"/><circle cx="754" cy="676.5" r="1.6" fill="#c4c4c4"/><circle cx="813.3" cy="676.5" r="5.2" fill="#f0f0f0" stroke="#666" stroke-width="0.9"/><path d="M810 676.5H816.6M813.3 673.2V679.8" stroke="#4a4a4a" stroke-width="1.2"/></svg>
</div></body></html>
